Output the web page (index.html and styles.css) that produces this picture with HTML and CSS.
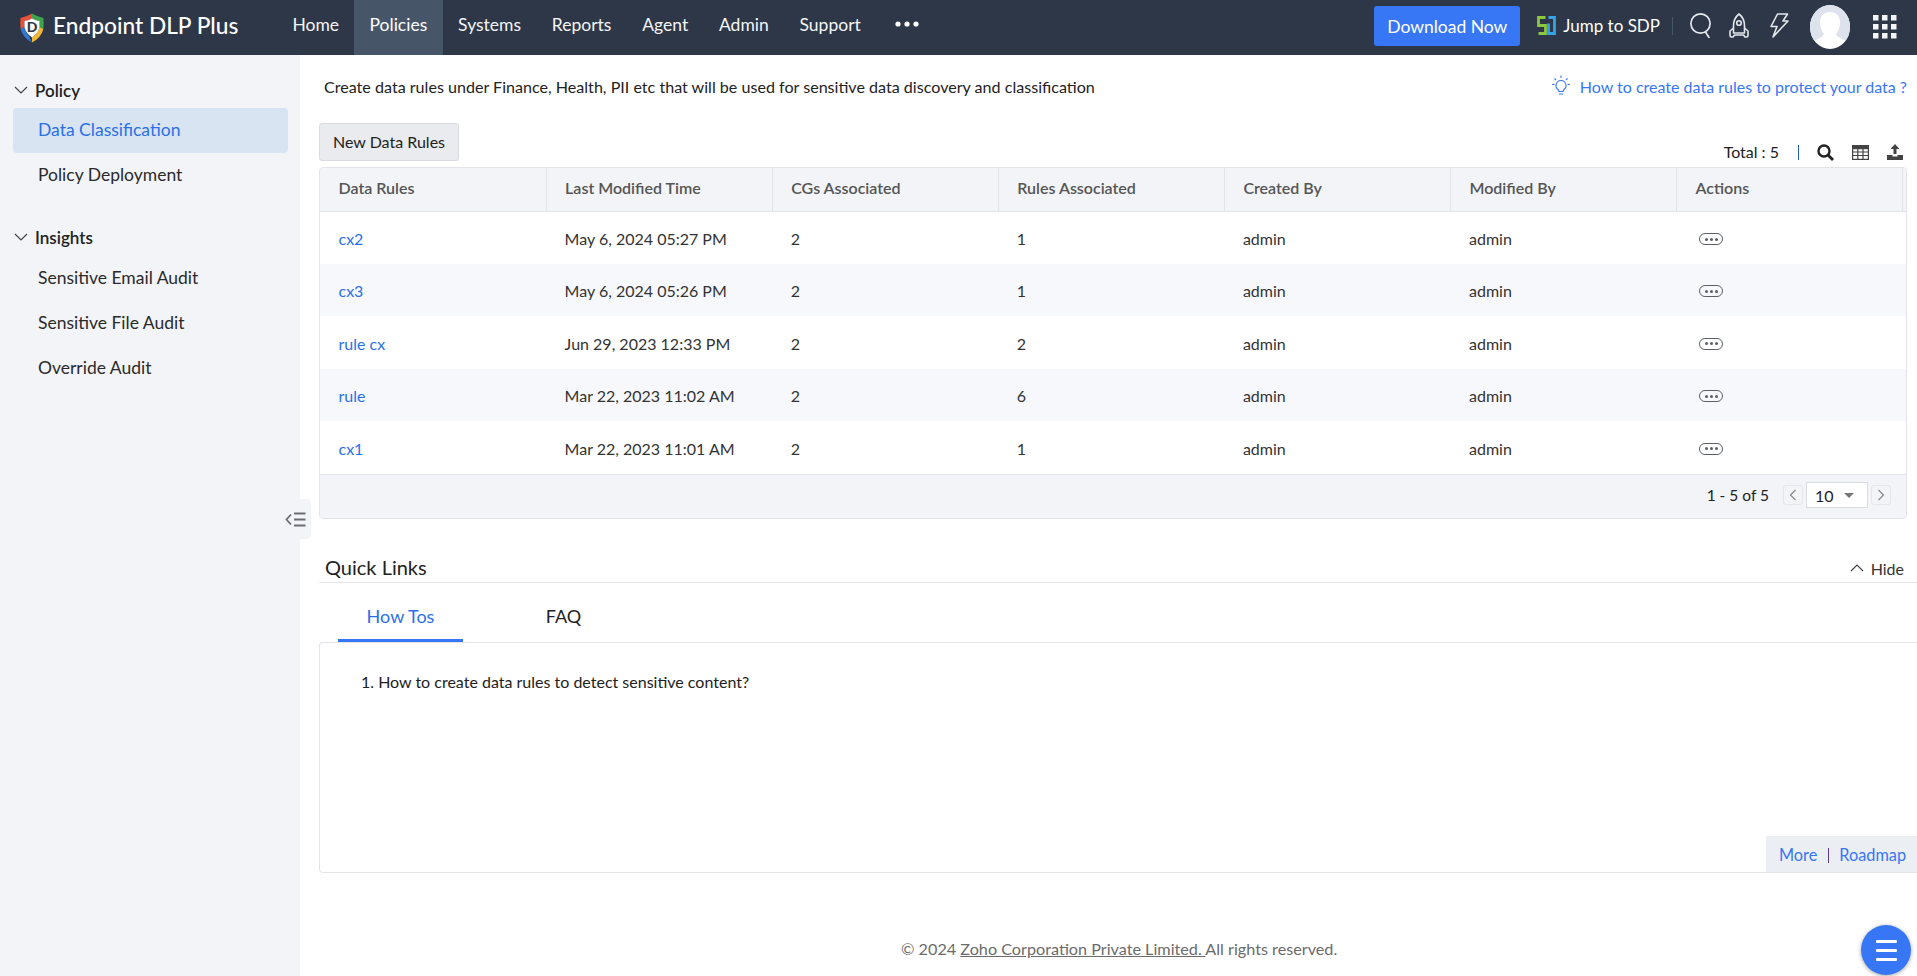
FILE: index.html
```html
<!DOCTYPE html>
<html lang="en">
<head>
<meta charset="utf-8">
<title>Endpoint DLP Plus</title>
<link rel="stylesheet" href="styles.css">
</head>
<body>
<header class="topbar">
  <div class="brand">
    <svg class="logo" viewBox="0 0 26 32" width="26" height="32">
      <path d="M1.500 6 Q7 5 13 1.500 L13 6.500 Q9 8.500 5.500 9 L5.500 15 L1.600 17 Q1 11 1.500 6Z" fill="#e8503a"/>
      <path d="M13 1.500 Q19 5 24.500 6 Q25 11 24.400 17 L20.500 15 L20.500 9 Q17 8.500 13 6.500Z" fill="#3fa34d"/>
      <path d="M1.600 17 L5.500 15 Q6.500 21 10 24 L13 30.500 Q4 26 1.600 17Z" fill="#2f78d6"/>
      <path d="M24.400 17 L20.500 15 Q19.500 21 13 25.500 L13 30.500 Q22 26 24.400 17Z" fill="#f2b632"/>
      <path d="M5.500 9 Q9 8.500 13 6.500 Q17 8.500 20.500 9 L20.500 15 Q19.500 21 13 25.500 Q6.500 21 5.500 15Z" fill="#fff"/>
      <text x="13" y="20" class="logo-d">D</text>
    </svg>
    <span class="brand-name">Endpoint DLP Plus</span>
  </div>
  <nav class="mainnav">
    <a class="nav-item">Home</a>
    <a class="nav-item active">Policies</a>
    <a class="nav-item">Systems</a>
    <a class="nav-item">Reports</a>
    <a class="nav-item">Agent</a>
    <a class="nav-item">Admin</a>
    <a class="nav-item">Support</a>
    <a class="nav-item nav-more"><svg viewBox="0 0 24 6" width="24" height="6"><circle cx="3" cy="3" r="2.600" fill="#fff"/><circle cx="12" cy="3" r="2.600" fill="#fff"/><circle cx="21" cy="3" r="2.600" fill="#fff"/></svg></a>
  </nav>
  <div class="top-actions">
    <button class="download">Download Now</button>
    <a class="jump">
      <svg viewBox="0 0 19 19" width="19" height="19" fill="none" stroke-width="2.800"><path d="M8.500 1.500H1.500v8h7v8H1.500" stroke="#8bc83f"/><path d="M11.500 7.500v10h6V1.500h-6" stroke="#35a3e8"/></svg>
      <span>Jump to SDP</span>
    </a>
    <span class="top-sep"></span>
    <svg class="top-icon" viewBox="0 0 22 25" width="22" height="25" fill="none" stroke="#e4e7ec" stroke-width="1.700"><circle cx="10.500" cy="10.500" r="9.600"/><path d="M15.500 19l3.500 5.500" stroke-linecap="round"/></svg>
    <svg class="top-icon ic-rocket" viewBox="0 0 22 25" width="22" height="25" fill="none" stroke="#e4e7ec" stroke-width="1.600" stroke-linejoin="round"><path d="M11 1C15.500 4.500 16.500 9 16.500 13v7h-11v-7C5.500 9 6.500 4.500 11 1z"/><circle cx="11" cy="10" r="2.300"/><path d="M5.500 15L2 18v4.500c0 1 .8 1.500 1.500 1.500h1.500l1.500-2h9l1.500 2h1.500c.7 0 1.500-.5 1.500-1.500V18l-3.500-3"/></svg>
    <svg class="top-icon ic-bolt" viewBox="0 0 20 25" width="20" height="25" fill="none" stroke="#e4e7ec" stroke-width="1.600" stroke-linejoin="round"><path d="M8.500 1h10l-4.500 7h5L4 24l4-10.500H2z"/></svg>
    <span class="avatar"><svg viewBox="0 0 40 44" width="40" height="44"><clipPath id="avclip"><ellipse cx="20" cy="22" rx="20" ry="22"/></clipPath><ellipse cx="20" cy="22" rx="20" ry="22" fill="#fff"/><path d="M0 0h40v38l-6-3c-3-1.500-7-3-8-6 3-4 4-8 4-12 0-6-4-10-10-10S10 11 10 17c0 4 1 8 4 12-1 3-5 4.500-8 6l-6 3Z" fill="#dde2ec" clip-path="url(#avclip)"/></svg></span>
    <svg class="top-icon apps" viewBox="0 0 24 24" width="24" height="24" fill="#f2f4f7"><rect x="0" y="0" width="5.500" height="5.500"/><rect x="9" y="0" width="5.500" height="5.500"/><rect x="18" y="0" width="5.500" height="5.500"/><rect x="0" y="9" width="5.500" height="5.500"/><rect x="9" y="9" width="5.500" height="5.500"/><rect x="18" y="9" width="5.500" height="5.500"/><rect x="0" y="18" width="5.500" height="5.500"/><rect x="9" y="18" width="5.500" height="5.500"/><rect x="18" y="18" width="5.500" height="5.500"/></svg>
  </div>
</header>

<div class="shell">
  <aside class="sidebar">
    <div class="side-group">
      <div class="side-head"><svg viewBox="0 0 14 8" width="14" height="8" fill="none" stroke="#444" stroke-width="1.200"><path d="M1 1l6 6 6-6"/></svg><span>Policy</span></div>
      <a class="side-item selected">Data Classification</a>
      <a class="side-item">Policy Deployment</a>
    </div>
    <div class="side-group">
      <div class="side-head insights"><svg viewBox="0 0 14 8" width="14" height="8" fill="none" stroke="#444" stroke-width="1.200"><path d="M1 1l6 6 6-6"/></svg><span>Insights</span></div>
      <a class="side-item">Sensitive Email Audit</a>
      <a class="side-item">Sensitive File Audit</a>
      <a class="side-item">Override Audit</a>
    </div>
    <div class="collapse-tab"><svg viewBox="0 0 21 15" width="21" height="15" fill="none" stroke="#6a6d74" stroke-width="1.800"><path d="M6 2.500L1.500 7.500 6 12.500"/><path d="M9 1.500h11.500M9 7.500h11.500M9 13.500h11.500"/></svg></div>
  </aside>

  <main class="content">
    <div class="intro">
      <p class="intro-text">Create data rules under Finance, Health, PII etc that will be used for sensitive data discovery and classification</p>
      <a class="help-link"><svg viewBox="0 0 22 22" width="22" height="22" fill="none" stroke="#3777f5" stroke-width="1.100"><path d="M11 5.500a5 5 0 0 1 3 9c-.6.500-.9 1-.9 2H8.900c0-1-.3-1.500-.9-2a5 5 0 0 1 3-9z"/><path d="M9 19h4M11 0.500v2.500M2 9.500h2.500M17.500 9.500H20M4.500 3.500l1.500 1.500M17.500 3.500L16 5"/></svg><span>How to create data rules to protect your data ?</span></a>
    </div>

    <div class="toolbar">
      <button class="new-btn">New Data Rules</button>
      <div class="tools">
        <span class="total">Total : 5</span>
        <span class="tool-sep"></span>
        <svg viewBox="0 0 17 17" width="17" height="17" fill="none" stroke="#222" stroke-width="2.400"><circle cx="7" cy="7" r="5.500"/><path d="M11 11l5 5" stroke-width="2.800"/></svg>
        <svg viewBox="0 0 17 15" width="17" height="15" fill="none" stroke="#444" stroke-width="1.200"><rect x="0.600" y="0.600" width="15.800" height="13.800"/><rect x="0.600" y="0.600" width="15.800" height="3" fill="#444"/><path d="M0.600 7h15.800M0.600 10.500h15.800M5.800 3.500v11M11 3.500v11"/></svg>
        <svg viewBox="0 0 16 16" width="16" height="16" fill="#444"><path d="M8 0l4.500 5H9.500v5h-3V5H3.500z"/><path d="M0 11h5.500v1.500h5V11H16v5H0z"/></svg>
      </div>
    </div>

    <div class="table-card">
      <table class="rules">
        <thead>
          <tr><th>Data Rules</th><th>Last Modified Time</th><th>CGs Associated</th><th>Rules Associated</th><th>Created By</th><th>Modified By</th><th>Actions</th></tr>
        </thead>
        <tbody>
          <tr><td><a>cx2</a></td><td>May 6, 2024 05:27 PM</td><td>2</td><td>1</td><td>admin</td><td>admin</td><td><span class="more-pill"><i></i><i></i><i></i></span></td></tr>
          <tr><td><a>cx3</a></td><td>May 6, 2024 05:26 PM</td><td>2</td><td>1</td><td>admin</td><td>admin</td><td><span class="more-pill"><i></i><i></i><i></i></span></td></tr>
          <tr><td><a>rule cx</a></td><td>Jun 29, 2023 12:33 PM</td><td>2</td><td>2</td><td>admin</td><td>admin</td><td><span class="more-pill"><i></i><i></i><i></i></span></td></tr>
          <tr><td><a>rule</a></td><td>Mar 22, 2023 11:02 AM</td><td>2</td><td>6</td><td>admin</td><td>admin</td><td><span class="more-pill"><i></i><i></i><i></i></span></td></tr>
          <tr><td><a>cx1</a></td><td>Mar 22, 2023 11:01 AM</td><td>2</td><td>1</td><td>admin</td><td>admin</td><td><span class="more-pill"><i></i><i></i><i></i></span></td></tr>
        </tbody>
      </table>
      <div class="pager">
        <span class="range">1 - 5 of 5</span>
        <span class="page-btn"><svg viewBox="0 0 8 12" width="8" height="12" fill="none" stroke="#888" stroke-width="1.200"><path d="M6.500 1L1.500 6l5 5"/></svg></span>
        <span class="page-size">10<i class="caret"></i></span>
        <span class="page-btn"><svg viewBox="0 0 8 12" width="8" height="12" fill="none" stroke="#888" stroke-width="1.200"><path d="M1.500 1l5 5-5 5"/></svg></span>
      </div>
    </div>

    <section class="quick">
      <div class="quick-head">
        <h2>Quick Links</h2>
        <a class="hide"><svg viewBox="0 0 14 8" width="14" height="8" fill="none" stroke="#444" stroke-width="1.200"><path d="M1 7l6-6 6 6"/></svg>Hide</a>
      </div>
      <div class="tabs">
        <a class="tab current">How Tos</a>
        <a class="tab">FAQ</a>
      </div>
      <div class="tab-body">
        <ol class="howto"><li>How to create data rules to detect sensitive content?</li></ol>
        <div class="more-links"><a>More</a><span class="ml-sep"></span><a>Roadmap</a></div>
      </div>
    </section>

    <footer class="copy">© 2024 <a>Zoho Corporation Private Limited. </a>All rights reserved.</footer>
  </main>
</div>

<button class="fab" aria-label="Menu"><i></i><i></i><i></i></button>
</body>
</html>
```

FILE: styles.css
```css
* { box-sizing: border-box; }
html, body { margin: 0; height: 100%; overflow: hidden; }
body { font-family: Lato, "Open Sans", sans-serif; font-size: 16px; color: #222; background: #fff; display: flex; flex-direction: column; }
a { cursor: pointer; }
p, h2, ol { margin: 0; padding: 0; }

.topbar { height: 55px; flex: none; background: #2d3748; display: flex; align-items: center; color: #fff; }
.brand { width: 293px; padding-left: 19px; padding-bottom: 3px; display: flex; align-items: center; gap: 8px; }
.logo { flex: none; margin-top: 3px; }
.logo-d { font-family: Lato, sans-serif; font-weight: 900; font-size: 14px; fill: #2d3748; text-anchor: middle; }
.brand-name { font-size: 22.700px; font-weight: 500; margin-top: -2px; white-space: nowrap; }
.mainnav { display: flex; height: 100%; margin-left: -16px; }
.nav-item { display: flex; align-items: center; padding: 0 15.400px 7px; font-size: 17.500px; color: #f4f5f7; }
.nav-item:first-child { padding-right: 15px; }
.nav-item.active { background: #475569; padding: 0 15.500px 7px; color: #fff; }
.nav-item.nav-more { padding-left: 19px; }
.top-actions { margin-left: auto; display: flex; align-items: center; height: 100%; }
.download { width: 146px; height: 40px; margin-top: -3px; border: 0; border-radius: 3px; background: #3777f5; color: #fff; font: 17.500px Lato, sans-serif; }
.jump { margin-left: 17px; padding-bottom: 5px; display: flex; align-items: center; gap: 7px; font-size: 17px; color: #fff; }
.top-sep { width: 1px; height: 18px; margin-top: -4px; margin-left: 12px; background: #475569; }
.top-icon { flex: none; margin-left: 18px; margin-top: -5px; }
.top-sep + .top-icon { margin-left: 17px; }
.top-icon.ic-rocket { margin-left: 16px; }
.top-icon.ic-bolt { margin-left: 19px; }
.avatar { display: block; width: 40px; height: 44px; margin-top: -1px; margin-left: 21px; }
.apps { margin-left: 23px; margin-right: 20px; margin-top: -2px; }

.shell { flex: 1; display: flex; min-height: 0; }
.sidebar { position: relative; width: 300px; flex: none; background: #f2f4f8; padding: 0 12px 0 13px; }
.side-head { display: flex; align-items: center; gap: 7px; height: 30px; font-size: 17px; font-weight: 600; color: #222; padding-left: 1px; margin-top: 20px; margin-bottom: 3px; }
.side-item { display: flex; align-items: center; height: 45px; padding-left: 25px; padding-bottom: 3px; font-size: 17.500px; color: #2a2a2a; border-radius: 4px; }
.side-head.insights { margin-top: 24px; margin-bottom: 4px; }
.side-item.selected { background: #d8e4f1; color: #2b70e8; }
.collapse-tab { position: absolute; left: 280px; top: 444px; width: 31px; height: 40px; display: flex; align-items: center; padding-left: 5px; background: #f2f4f8; border-radius: 0 5px 5px 0; }

.content { flex: 1; min-width: 0; padding: 0 10px 0 19px; display: flex; flex-direction: column; }
.intro { display: flex; justify-content: space-between; align-items: center; height: 30px; margin-top: 16px; margin-bottom: 2px; padding-left: 5px; }
.intro-text { font-size: 16.100px; color: #222; }
.help-link { display: flex; align-items: center; gap: 8px; color: #3777f5; font-size: 16px; }
.toolbar { display: flex; justify-content: space-between; align-items: flex-end; height: 38px; margin-top: 20px; }
.new-btn { width: 140px; height: 38px; padding: 0 0 2px; background: #e9ebef; border: 1px solid #d9dbe1; border-radius: 3px; font: 16px Lato, sans-serif; color: #222; }
.tools { display: flex; align-items: center; gap: 18px; height: 20px; margin-bottom: -1px; padding-right: 4px; }
.total { font-size: 16px; margin-right: 1px; margin-bottom: 2px; }
.tool-sep { width: 1px; height: 15px; background: #1e5fa8; }

.table-card { margin-top: 6px; border: 1px solid #e2e4ea; border-radius: 4px; overflow: hidden; }
.rules { width: 100%; border-collapse: collapse; table-layout: fixed; }
.rules th { width: 226.100px; height: 43px; padding: 0 0 3px 18.500px; text-align: left; font-size: 16px; font-weight: 600; color: #555; background: #f2f4f8; border-right: 1px solid #e2e4ea; border-bottom: 1px solid #e2e4ea; }
.rules th:last-child { width: auto; border-right: 0; box-shadow: inset -3px 0 0 #f2f4f8, inset -4px 0 0 #e2e4ea; }
.rules td { height: 52.500px; padding: 2px 0 0 18.500px; font-size: 16px; color: #333; }
.rules tbody tr:nth-child(even) { background: #f7f8fb; }
.rules td a { color: #2b70e8; }
.more-pill { display: inline-flex; align-items: center; justify-content: center; gap: 2px; width: 24px; height: 12px; margin-left: 4px; margin-bottom: 3px; border: 1.500px solid #5c5f66; border-radius: 6px; vertical-align: middle; }
.more-pill i { width: 3px; height: 3px; border-radius: 50%; background: #5c5f66; }
.pager { height: 44px; padding-bottom: 2px; display: flex; align-items: center; justify-content: flex-end; background: #f2f4f8; border-top: 1px solid #e2e4ea; padding-right: 15px; }
.range { font-size: 15.500px; margin-right: 14px; color: #222; }
.page-btn { width: 20px; height: 20px; display: flex; align-items: center; justify-content: center; border: 1px solid #e4e6eb; border-radius: 3px; }
.page-size { width: 62px; height: 26px; margin: 0 3px; padding-left: 8px; display: flex; align-items: center; gap: 10px; background: #fff; border: 1px solid #d9dbe1; font-size: 16px; }
.caret { width: 0; height: 0; border: 5.500px solid transparent; border-top: 5.500px solid #777; border-bottom: 0; }

.quick { margin-right: -10px; margin-top: 31px; }
.quick-head { display: flex; justify-content: space-between; align-items: center; height: 33px; border-bottom: 1px solid #e2e4ea; padding: 3px 13px 0 6px; }
.quick-head h2 { font-size: 20px; font-weight: 400; color: #222; }
.hide { display: flex; align-items: center; gap: 7px; margin-top: 2px; font-size: 16px; color: #333; }
.tabs { display: flex; height: 59px; }
.tab { display: flex; align-items: center; justify-content: center; height: 59px; width: 125px; padding-top: 7px; font-size: 18px; color: #222; }
.tab + .tab { margin-left: 38px; }
.tabs .tab:first-child { margin-left: 19px; }
.tab.current { padding-top: 10px; color: #2b70e8; border-bottom: 3px solid #3777f5; }
.tab-body { position: relative; height: 231px; border: 1px solid #e2e4ea; border-right: 0; border-radius: 4px 0 0 4px; padding: 29px 0 0 41px; }
.howto { list-style: none; font-size: 16px; color: #222; }
.howto li::before { content: "1. "; }
.more-links { position: absolute; right: 0; bottom: 0; height: 36px; width: 151px; padding-top: 1px; background: #ebeef3; display: flex; align-items: center; padding-left: 13px; color: #3777f5; font-size: 16.300px; }
.ml-sep { width: 1px; height: 15px; margin: 2px 10.500px 0; background: #5a3d96; }

.copy { margin-top: 66px; padding-left: 582px; font-size: 16.200px; color: #6b6b6b; white-space: nowrap; }
.copy a { text-decoration: underline; }

.fab { position: fixed; right: 6px; bottom: 1px; width: 50px; height: 50px; border: 0; border-radius: 50%; background: #3777f5; box-shadow: 0 1px 4px rgba(0,0,0,.35); display: flex; flex-direction: column; align-items: center; justify-content: center; gap: 6px; padding: 0; }
.fab i { width: 21px; height: 3px; background: #fff; border-radius: 1px; }
```
